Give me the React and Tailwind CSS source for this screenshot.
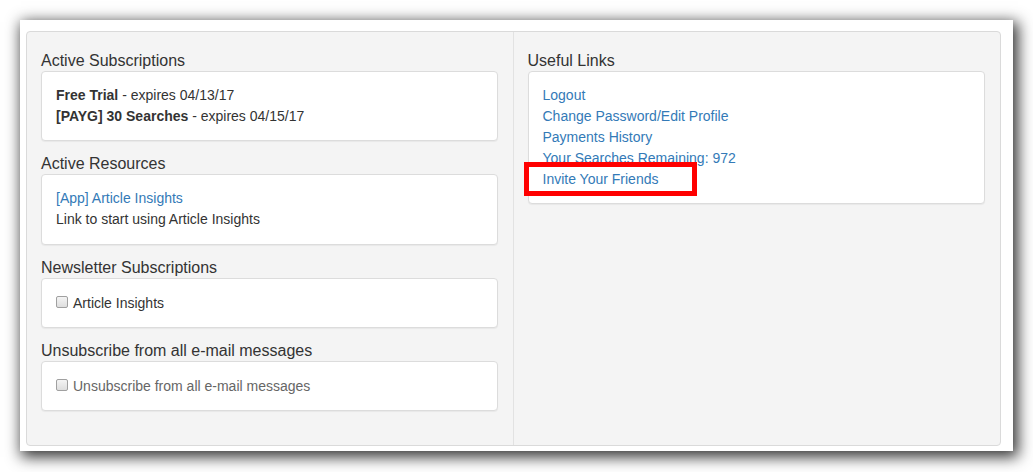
import React from 'react';

const font = { fontFamily: '"Liberation Sans", Arial, sans-serif' };

function Section({ title, children, first, h }) {
  return (
    <div className={first ? '' : 'mt-[13px]'}>
      <h4 className="text-[16px] leading-[20px] text-[#333] font-normal">{title}</h4>
      <div className={`${h} bg-white border border-[#dcdcdc] rounded-[4px] shadow-[0_1px_1px_rgba(0,0,0,0.05)] px-[14px] pt-[13px] text-[14px] leading-[21px] text-[#333]`}>
        {children}
      </div>
    </div>
  );
}

function Checkbox({ label, muted }) {
  return (
    <label className="flex items-start leading-[22px]">
      <span className="mt-[4px] mr-[5px] w-[12px] h-[12px] shrink-0 rounded-[2px] border border-[#a0a0a0] bg-gradient-to-b from-[#f4f4f4] to-[#dedede]" />
      <span className={muted ? 'text-[#666]' : 'text-[#333]'}>{label}</span>
    </label>
  );
}

export default function App() {
  return (
    <div className="w-[1033px] h-[472px] bg-white pt-[20px] pl-[20px]" style={font}>
      <div className="w-[993px] h-[431px] bg-white shadow-[3px_4px_14px_2px_rgba(0,0,0,0.8)] pt-[11px] pl-[6px]">
        <div className="w-[975px] h-[415px] bg-[#f4f4f4] border border-[#dadada] rounded-[4px] grid grid-cols-2">
          <div className="border-r border-[#e2e2e2] pl-[14px] pr-[15px] pt-[19px]">
            <Section title="Active Subscriptions" first h="h-[70px]">
              <div><b>Free Trial</b> - expires 04/13/17</div>
              <div><b>[PAYG] 30 Searches</b> - expires 04/15/17</div>
            </Section>
            <Section title="Active Resources" h="h-[71px]">
              <div><a className="text-[#337ab7]" href="#">[App] Article Insights</a></div>
              <div>Link to start using Article Insights</div>
            </Section>
            <Section title="Newsletter Subscriptions" h="h-[50px]">
              <Checkbox label="Article Insights" />
            </Section>
            <Section title="Unsubscribe from all e-mail messages" h="h-[50px]">
              <Checkbox label="Unsubscribe from all e-mail messages" muted />
            </Section>
          </div>
          <div className="pl-[14px] pr-[15px] pt-[19px]">
            <Section title="Useful Links" first h="h-[133px]">
              <div className="flex flex-col text-[#337ab7]">
                <a href="#">Logout</a>
                <a href="#">Change Password/Edit Profile</a>
                <a href="#">Payments History</a>
                <span>Your Searches Remaining: 972</span>
                <a href="#" className="relative self-start">
                  Invite Your Friends
                  <span className="absolute left-[-19px] right-[-39px] top-[-7px] bottom-[-6px] border-[5px] border-[#ff0000]" />
                </a>
              </div>
            </Section>
          </div>
        </div>
      </div>
    </div>
  );
}
